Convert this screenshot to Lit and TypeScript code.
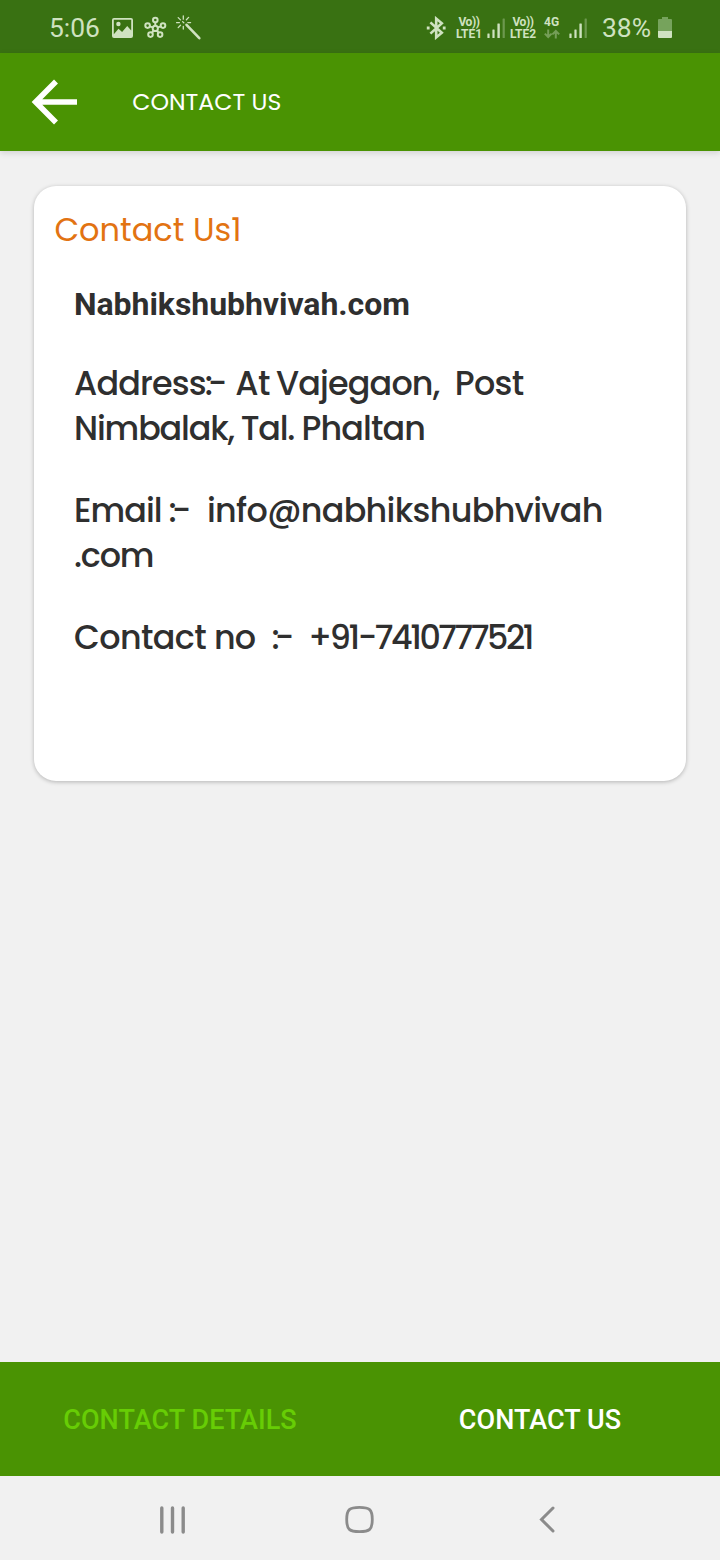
import { LitElement, html, css } from "lit";
import { customElement } from "lit/decorators.js";
import { styleMap } from "lit/directives/style-map.js";

/** A run of text, the advance to the next run, and its tracking. */
type Run = [text: string, advance: number, tracking: number];

const PARAGRAPHS: Run[][][] = [
  [
    [["Address", 130.7, -0.85], [":-", 30.5, -5], ["At", 40.8, -0.5], ["Vajegaon,", 178.8, -0.85], ["Post", 72, -0.7]],
    [["Nimbalak,", 166.7, -1.15], ["Tal.", 60.8, -1.2], ["Phaltan", 130, -0.9]],
  ],
  [
    [["Email", 94.6, -0.95], [":-", 38.4, -5], ["info@nabhikshubhvivah", 400, -0.68]],
    [[".com", 90, -1.2]],
  ],
  [
    [["Contact", 140, -0.6], ["no", 57.6, -0.8], [":-", 36.7, -5], ["+91-7410777521", 230, -2.45]],
  ],
];

@customElement("status-bar")
export class StatusBar extends LitElement {
  static styles = css`
    :host {
      display: flex;
      justify-content: space-between;
      align-items: center;
      box-sizing: border-box;
      height: 53px;
      padding: 2px 48px 0 49px;
      background: #397112;
      color: #cfe2c0;
      font: 400 26.4px Roboto, sans-serif;
    }
    .group { display: flex; align-items: center; height: 51px; }
    .clock { width: 62px; }
    .battery-text { width: 56px; margin-left: 14px; }
    svg { display: block; flex: none; }
    .lte {
      width: 31px;
      font-weight: 700;
      font-size: 12px;
      line-height: 12px;
      text-align: center;
      white-space: nowrap;
    }
    .lte div { width: 27px; }
    .lte .vo { letter-spacing: -0.4px; }
    .second { margin-left: 4px; }
    .net { width: 25px; margin-left: 3.5px; font-weight: 700; font-size: 12px; line-height: 12px; }
    .net svg { margin-top: 1px; }
  `;

  private signal() {
    return html`<svg width="19" height="24" viewBox="0 0 19 24" fill="currentColor">
      <rect x="0.4" y="17.5" width="2.2" height="4.5" rx="0.5" />
      <rect x="5.4" y="13.5" width="2.2" height="8.5" rx="0.5" />
      <rect x="10.4" y="7.5" width="2.4" height="14.5" rx="0.5" />
      <rect x="15.6" y="2.5" width="2.2" height="19.5" rx="0.5" opacity="0.35" />
    </svg>`;
  }

  render() {
    return html`
      <div class="group">
        <span class="clock">5:06</span>
        <svg width="33" height="24" viewBox="0 0 33 24">
          <path fill="currentColor" fill-rule="evenodd" d="M3 2h17a2 2 0 0 1 2 2v16a2 2 0 0 1-2 2H3a2 2 0 0 1-2-2V4a2 2 0 0 1 2-2zM2.8 3.8v14.5l4.7-5.5 3.6 3.2 5.1-6 4 4.6V3.8z" />
          <circle cx="7.4" cy="8" r="2.2" fill="currentColor" />
        </svg>
        <svg width="32" height="24" viewBox="0 0 32 24" fill="none" stroke="currentColor" stroke-width="2">
          <circle cx="11.3" cy="12.4" r="2.6" />
          <circle cx="11.3" cy="4" r="2.3" />
          <circle cx="3.6" cy="9.6" r="2.3" />
          <circle cx="19" cy="9.6" r="2.3" />
          <circle cx="6.5" cy="18.6" r="2.3" />
          <circle cx="16.1" cy="18.6" r="2.3" />
          <path d="M11.3 6.3v3.4M5.7 10.4l3 1M16.9 10.4l-3 1M7.8 16.9l2-2.4M14.8 16.9l-2-2.4" />
        </svg>
        <svg width="28" height="26" viewBox="0 0 28 26" fill="none" stroke="currentColor" stroke-linecap="round">
          <path stroke-width="2.6" d="M10.5 9.8l12.8 13.4" />
          <path stroke-width="1.3" d="M7.3 0.8v3.4M2.2 2.6l2.3 2.3M12.6 2.4l-2.2 2.3M0.6 7.6h2.8M11.8 7.6h2.8M2.2 12.6l2.3-2.4M7.3 11.4v2.6M6.6 6.6l1.2 1.2" />
        </svg>
      </div>
      <div class="group">
        <svg width="30" height="24" viewBox="0 0 30 24" fill="none" stroke="currentColor" stroke-width="2.6">
          <path d="M4.4 6.4l11.4 10.4-5.6 4.6V2.6l5.6 4.6L4.4 17.6" />
          <path stroke-width="2.8" d="M0.8 12h2.8M16.8 12h2.8" />
        </svg>
        <div class="lte"><div class="vo">Vo))</div><div>LTE1</div></div>
        ${this.signal()}
        <div class="lte second"><div class="vo">Vo))</div><div>LTE2</div></div>
        <div class="net">4G
          <svg width="16" height="10" viewBox="0 0 16 10" fill="none" stroke="currentColor" stroke-width="2" opacity="0.4">
            <path d="M4.2 0.5v7M0.8 4.6l3.4 3.4 3.4-3.4M11.8 9.5v-7M8.4 5.4L11.8 2l3.4 3.4" />
          </svg>
        </div>
        ${this.signal()}
        <span class="battery-text">38%</span>
        <svg width="14" height="24" viewBox="0 0 14 24">
          <path fill="#76a35c" d="M4 1h6v2h3a1 1 0 0 1 1 1v11H0V4a1 1 0 0 1 1-1h3z" />
          <path fill="currentColor" d="M0 15h14v6a1 1 0 0 1-1 1H1a1 1 0 0 1-1-1z" />
        </svg>
      </div>
    `;
  }
}

@customElement("app-root")
export class AppRoot extends LitElement {
  static styles = css`
    :host {
      display: flex;
      flex-direction: column;
      height: 1560px;
      background: #f1f1f1;
      overflow: hidden;
    }
    .toolbar {
      display: flex;
      align-items: center;
      flex: none;
      height: 98px;
      background: #4a9303;
      box-shadow: 0 2px 6px rgba(0, 0, 0, 0.13);
      color: #fff;
      font: 400 23.6px Poppins, Inter, sans-serif;
    }
    .title { padding-bottom: 2px; }
    .back { display: block; width: 48px; height: 48px; margin: 0 54.2px 0 30px; }
    main { flex: 1; padding: 35px 34px 0; }
    .card {
      box-sizing: border-box;
      height: 595px;
      padding-top: 21px;
      border-radius: 22px;
      background: #fff;
      box-shadow: 0 1px 4px rgba(0, 0, 0, 0.26);
      color: #2f2f2f;
    }
    .heading {
      margin: 0 0 29.5px 20.4px;
      color: #e27312;
      font: 400 32px/45px Poppins, Inter, sans-serif;
    }
    .site { margin: 0 0 34.5px 40px; font: 700 32px/45px Roboto, sans-serif; letter-spacing: -0.05px; }
    .para { margin: 0 0 37px 40px; font: 500 33.4px/45px Poppins, Inter, sans-serif; }
    .line { display: flex; }
    .run { flex: none; white-space: nowrap; }
    .tabs {
      display: grid;
      grid-template-columns: 1fr 1fr;
      align-items: center;
      box-sizing: border-box;
      height: 114px;
      padding-top: 2px;
      background: #4a9303;
      color: #fff;
      font: 500 27px Roboto, sans-serif;
      letter-spacing: 0.06px;
      text-align: center;
    }
    .muted { color: #67cd05; }
    .nav { display: block; flex: none; width: 720px; height: 84px; }
  `;

  render() {
    return html`
      <status-bar></status-bar>
      <header class="toolbar">
        <svg class="back" viewBox="0 0 48 48" fill="none" stroke="#fff" stroke-width="5.6">
          <path d="M47 24H5M26 3.6L5.6 24 26 44.4" />
        </svg>
        <span class="title">CONTACT US</span>
      </header>
      <main>
        <section class="card">
          <div class="heading">Contact Us1</div>
          <div class="site">Nabhikshubhvivah.com</div>
          ${PARAGRAPHS.map((lines) => html`<div class="para">
            ${lines.map((runs) => html`<div class="line">
              ${runs.map(([text, advance, tracking]) => html`<span class="run"
                style=${styleMap({ width: `${advance}px`, letterSpacing: `${tracking}px` })}>${text}</span>`)}
            </div>`)}
          </div>`)}
        </section>
      </main>
      <div class="tabs">
        <span class="muted">CONTACT DETAILS</span>
        <span>CONTACT US</span>
      </div>
      <svg class="nav" viewBox="0 0 720 84" fill="none" stroke="#8b8b8b" stroke-width="3.4" stroke-linecap="round">
        <path d="M161.8 32v24M172.5 32v24M183.2 32v24" />
        <path stroke-width="2.8" d="M359.5 31.3c10 0 12.8 2.2 12.8 12.2s-2.8 12.2-12.8 12.2-12.8-2.2-12.8-12.2 2.8-12.2 12.8-12.2z" />
        <path stroke-width="3" d="M553 32L541.5 43.5 553 55" />
      </svg>
    `;
  }
}
